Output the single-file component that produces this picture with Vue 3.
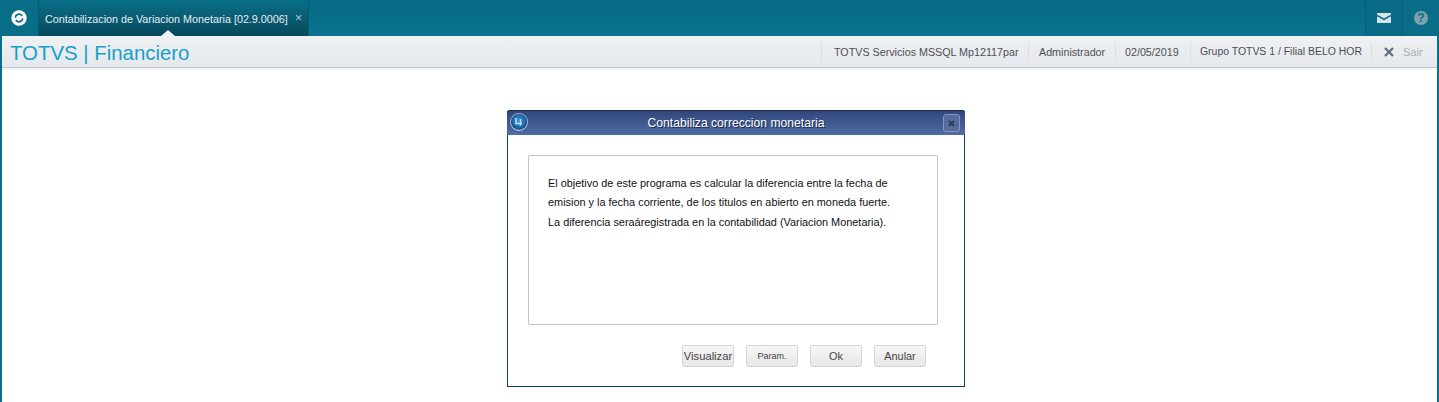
<script setup>
const lines = [
  'El objetivo de este programa es calcular la diferencia entre la fecha de',
  'emision y la fecha corriente, de los titulos en abierto en moneda fuerte.',
  'La diferencia seraáregistrada en la contabilidad (Variacion Monetaria).'
]
const infos = [
  { text: 'TOTVS Servicios MSSQL Mp12117par', cls: 'i1' },
  { text: 'Administrador', cls: 'i2' },
  { text: '02/05/2019', cls: 'i3' },
  { text: 'Grupo TOTVS 1 / Filial BELO HOR', cls: 'i4' }
]
const buttons = [
  { text: 'Visualizar', cls: 'wide' },
  { text: 'Param.', cls: 'small' },
  { text: 'Ok', cls: '' },
  { text: 'Anular', cls: '' }
]
</script>

<template>
  <div class="app">
    <header class="topbar">
      <div class="logo-cell">
        <svg class="logo" width="16" height="16" viewBox="0 0 16 16">
          <circle cx="8" cy="8" r="7.7" fill="#fff" />
          <path d="M4.3 7.6 A3.8 3.8 0 0 1 11.2 5.9" fill="none" stroke="#0a6d88" stroke-width="1.7" />
          <path d="M11.7 8.4 A3.8 3.8 0 0 1 4.8 10.1" fill="none" stroke="#0a6d88" stroke-width="1.7" />
        </svg>
      </div>
      <div class="tab">
        <span class="tab-title">Contabilizacion de Variacion Monetaria [02.9.0006]</span>
        <span class="tab-close">×</span>
        <span class="tab-notch"></span>
      </div>
      <div class="spacer"></div>
      <div class="icon-cell">
        <svg width="14" height="10" viewBox="0 0 14 10">
          <path d="M0 0H14V1.6L7 5.6L0 1.6Z" fill="#d5e3e8" />
          <path d="M0 3.2L7 7.2L14 3.2V10H0Z" fill="#d5e3e8" />
        </svg>
      </div>
      <div class="icon-cell help">
        <span class="help-mark">?</span>
      </div>
    </header>

    <div class="subbar">
      <div class="brand">TOTVS | Financiero</div>
      <div class="info">
        <span v-for="item in infos" :key="item.text" class="info-item" :class="item.cls">{{ item.text }}</span>
        <span class="exit">
          <svg width="10" height="10" viewBox="0 0 10 10">
            <path d="M1 1L9 9M9 1L1 9" stroke="#5f6f78" stroke-width="2.2" />
          </svg>
          <span class="exit-text">Sair</span>
        </span>
      </div>
    </div>

    <main class="canvas">
      <section class="dialog">
        <div class="dialog-head">
          <svg class="dialog-icon" width="18" height="18" viewBox="0 0 18 18">
            <defs>
              <radialGradient id="orb" cx="50%" cy="45%" r="55%">
                <stop offset="0" stop-color="#3f93dc" />
                <stop offset="0.62" stop-color="#1f6fb8" />
                <stop offset="0.82" stop-color="#164a80" />
                <stop offset="1" stop-color="#a9c0d4" />
              </radialGradient>
            </defs>
            <circle cx="9" cy="9" r="8.6" fill="url(#orb)" stroke="#b9c9d8" stroke-width="0.8" />
            <path d="M6 5V10.5H12M10.5 6V12.5" fill="none" stroke="#bfe0f5" stroke-width="1.5" />
          </svg>
          <span class="dialog-title">Contabiliza correccion monetaria</span>
          <span class="dialog-close">
            <svg width="7" height="7" viewBox="0 0 7 7">
              <path d="M1 1L6 6M6 1L1 6" stroke="#2f3a58" stroke-width="1.8" />
            </svg>
          </span>
        </div>
        <div class="dialog-body">
          <div class="message">
            <p v-for="line in lines" :key="line">{{ line }}</p>
          </div>
          <div class="actions">
            <button v-for="b in buttons" :key="b.text" class="btn" :class="b.cls">{{ b.text }}</button>
          </div>
        </div>
      </section>
    </main>
  </div>
</template>

<style>
html, body { margin: 0; background: #fff; overflow: hidden; }
</style>

<style scoped>
.app {
  width: 1439px;
  height: 402px;
  display: flex;
  flex-direction: column;
  font-family: "Liberation Sans", Arial, sans-serif;
  position: relative;
  overflow: hidden;
  background: #0a7089;
}
.topbar {
  height: 36px;
  flex: none;
  display: flex;
  background: linear-gradient(#056a85, #0b7390);
}
.logo-cell {
  width: 38px;
  border-right: 1px solid #055a70;
  display: flex;
  align-items: center;
  justify-content: center;
  background: #0a6d88;
}
.tab {
  width: 270px;
  position: relative;
  display: flex;
  align-items: center;
  padding-left: 6px;
  box-sizing: border-box;
  background: linear-gradient(#096e88, #07495c);
  border-right: 1px solid #0a5a70;
  margin-top: 1px;
}
.tab-title {
  color: #e4eef2;
  font-size: 10.78px;
  white-space: nowrap;
}
.tab-close {
  color: #a9c6d0;
  font-size: 13px;
  margin-left: 7px;
  margin-top: -3px;
  line-height: 1;
}
.tab-notch {
  position: absolute;
  left: 122px;
  bottom: 0;
  width: 0;
  height: 0;
  border-left: 7px solid transparent;
  border-right: 7px solid transparent;
  border-bottom: 6px solid #eef0f3;
}
.spacer { flex: 1; }
.icon-cell {
  width: 36px;
  display: flex;
  align-items: center;
  justify-content: center;
  background: #086a84;
  border-left: 1px solid #0a5f78;
}
.icon-cell.help { width: 36px; background: #0a6d88; }
.help-mark {
  width: 14px;
  height: 14px;
  border-radius: 50%;
  background: #7ea1af;
  color: #0a6d88;
  font-size: 12px;
  font-weight: 700;
  line-height: 14px;
  text-align: center;
}
.subbar {
  height: 32px;
  flex: none;
  display: flex;
  align-items: stretch;
  justify-content: space-between;
  margin: 0 2px;
  box-sizing: border-box;
  background: linear-gradient(#eff1f4, #e5e8ec);
  border-bottom: 1px solid #c1c6cb;
}
.brand {
  padding-left: 8px;
  font-size: 20.4px;
  line-height: 34px;
  color: #159fc9;
  white-space: nowrap;
}
.info {
  display: flex;
  align-items: center;
  height: 100%;
  color: #4a4f55;
  font-size: 10.72px;
}
.info-item {
  height: 20px;
  line-height: 20px;
  border-left: 1px solid #dcdfe3;
  white-space: nowrap;
  box-sizing: border-box;
  padding-left: 10px;
  flex: none;
}
.i1 { width: 207px; padding-left: 12px; }
.i2 { width: 87px; }
.i3 { width: 75px; padding-left: 9px; }
.i4 { width: 181px; padding-left: 9px; font-size: 10.45px; }
.exit {
  width: 66px;
  height: 20px;
  display: flex;
  align-items: center;
  gap: 9px;
  padding-left: 12px;
  box-sizing: border-box;
  border-left: 1px solid #dcdfe3;
  font-size: 11px;
}
.exit-text { color: #a6adb3; }
.canvas {
  flex: 1;
  margin: 0 2px;
  position: relative;
  background: #fff;
  border-top: 2px solid #f4f5f6;
}
.dialog {
  position: absolute;
  left: 505px;
  top: 40px;
  width: 458px;
  height: 277px;
  box-sizing: border-box;
  border: 1px solid #07406b;
  border-top: none;
  border-radius: 3px 3px 0 0;
  background: #fff;
  display: flex;
  flex-direction: column;
}
.dialog-head {
  height: 25px;
  flex: none;
  margin: 0 -1px;
  display: flex;
  align-items: center;
  justify-content: center;
  position: relative;
  border-radius: 3px 3px 0 0;
  border-top: 1px solid #1d2a44;
  box-sizing: border-box;
  background: linear-gradient(#31477c, #4f6da6);
}
.dialog-icon {
  position: absolute;
  left: 3px;
  top: 2px;
}
.dialog-title {
  color: #fff;
  font-size: 12.15px;
  font-weight: 400;
  text-shadow: 1px 1px 0 #1e2b4a;
}
.dialog-close {
  position: absolute;
  right: 5px;
  top: 3px;
  width: 15px;
  height: 16px;
  display: flex;
  align-items: center;
  justify-content: center;
  border: 1px solid #8497bf;
  border-radius: 3px;
  background: #566a9c;
}
.dialog-body {
  flex: 1;
  padding: 20px 26px 0 20px;
  display: flex;
  flex-direction: column;
}
.message {
  height: 170px;
  box-sizing: border-box;
  border: 1px solid #c6c6c6;
  border-radius: 2px;
  padding: 17.5px 19px 0;
  flex: none;
}
.message p {
  margin: 0;
  height: 19.5px;
  line-height: 19.5px;
  font-size: 10.9px;
  color: #111;
  white-space: nowrap;
}
.actions {
  display: flex;
  justify-content: flex-end;
  gap: 12px;
  margin-top: 20px;
  padding-right: 12px;
}
.btn {
  width: 52px;
  height: 22px;
  padding: 0;
  box-sizing: border-box;
  border: 1px solid #d5d5d5;
  border-radius: 2px;
  background: linear-gradient(#f6f6f6, #e6e6e6);
  color: #444;
  font-family: inherit;
  font-size: 10.9px;
}
.btn.small { font-size: 9px; }
.btn.wide { font-size: 11.2px; white-space: nowrap; }
</style>
